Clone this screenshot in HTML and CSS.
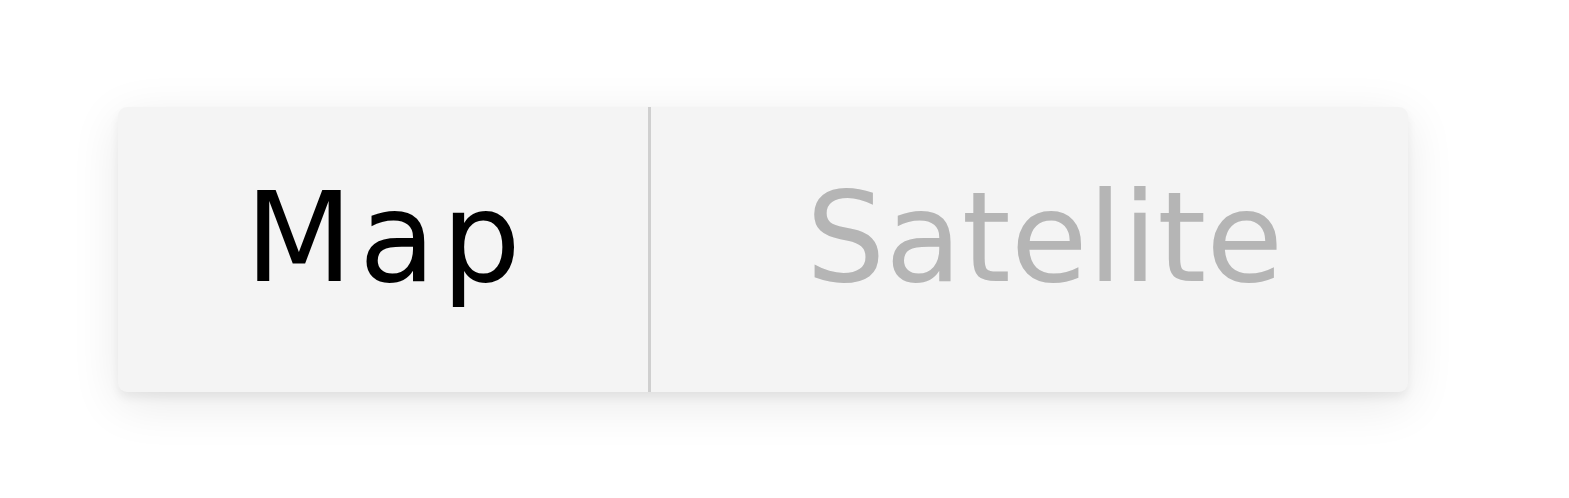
FILE: index.html
```html
<!DOCTYPE html>
<html lang="en">
<head>
  <meta charset="UTF-8">
  <meta name="viewport" content="width=device-width, initial-scale=1.0">
  <title>Map Type Toggle</title>
  <link rel="stylesheet" href="styles.css">
</head>
<body>
  <div class="toggle">
    <button type="button" class="toggle-btn active">Map</button>
    <span class="divider"></span>
    <button type="button" class="toggle-btn satellite">Satelite</button>
  </div>
</body>
</html>
```

FILE: styles.css
```css
/* Global Styles */
* {
  margin: 0;
  padding: 0;
  box-sizing: border-box;
}

body {
  font-family: "DejaVu Sans", "Liberation Sans", sans-serif;
  background-color: #fff;
  height: 498px;
  display: flex;
  align-items: center;
  padding-left: 118px;
}

.toggle {
  display: flex;
  width: 1290px;
  height: 285px;
  background: #f4f4f4;
  border-radius: 9px;
  box-shadow: 0 6px 10px rgba(0, 0, 0, 0.06),
              0 12px 50px rgba(0, 0, 0, 0.09);
}

.toggle-btn {
  display: flex;
  align-items: center;
  justify-content: center;
  height: 100%;
  padding-bottom: 23px;
  font-family: inherit;
  font-size: 125px;
  line-height: 1;
  background: none;
  border: none;
  color: #b5b5b5;
  cursor: pointer;
}

.toggle-btn.active {
  width: 530px;
  padding-left: 6px;
  letter-spacing: 6px;
  color: #000;
}

.toggle-btn.satellite {
  flex: 1;
  padding-left: 30px;
}

.divider {
  width: 3px;
  background: #cfcfcf;
}
```
